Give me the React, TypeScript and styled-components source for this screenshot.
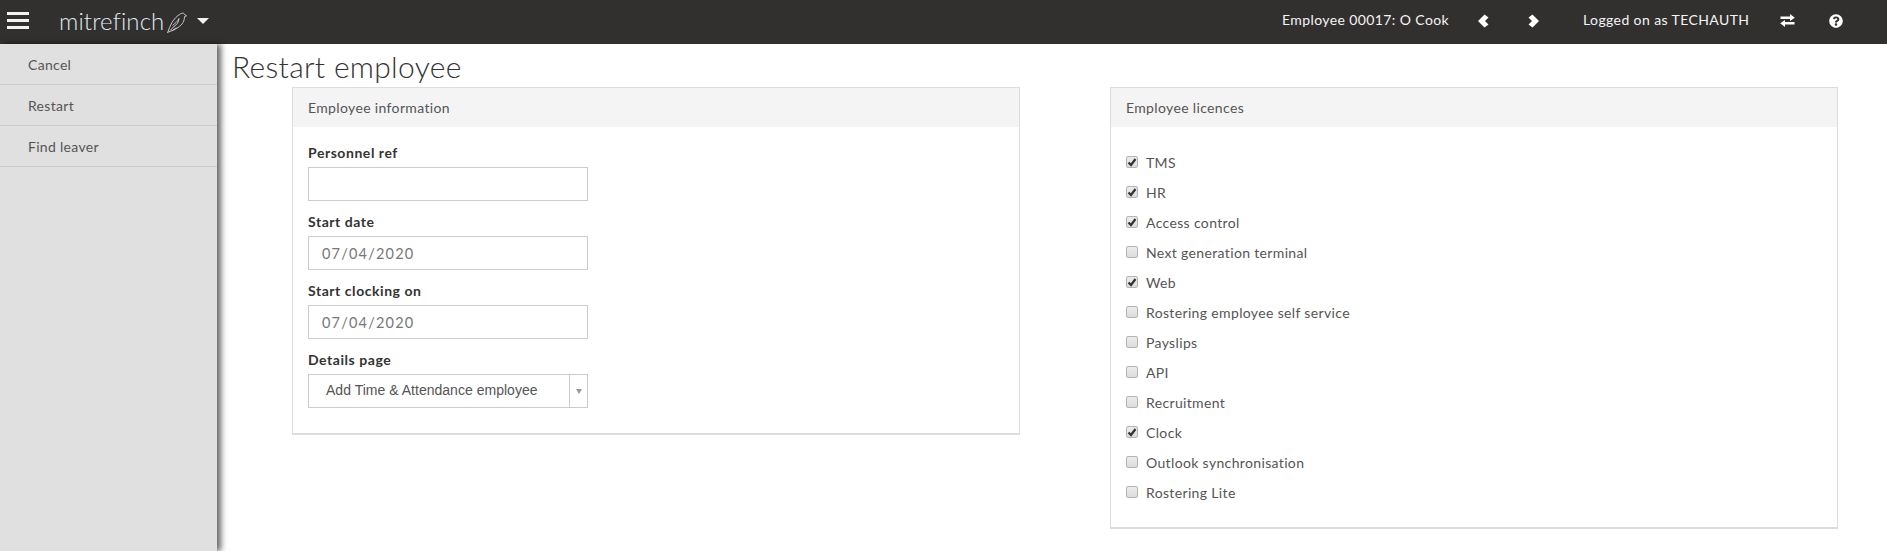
import React from 'react';
import styled, { createGlobalStyle } from 'styled-components';
import { FaQuestionCircle } from 'react-icons/fa';

const Global = createGlobalStyle`
  html, body { margin: 0; padding: 0; background: #fff; height: 100%; overflow: hidden; }
  body { font-family: Lato, "Open Sans", "Liberation Sans", sans-serif; color: #444; letter-spacing: 0.3px; }
  * { box-sizing: border-box; }
`;

const Page = styled.div`display: flex; flex-direction: column; height: 551px;`;
const NavBar = styled.header`
  height: 44px; background: #32302e; display: flex; align-items: center; color: #fff; flex: none; padding-bottom: 3px;
`;
const Burger = styled.div`
  width: 22px; margin-left: 7px; display: flex; flex-direction: column; gap: 4px;
  & > span { display: block; height: 3px; background: #f2f2f2; }
`;
const Brand = styled.div`
  margin-left: 30px; font-size: 24px; font-weight: 300; color: #dfeaf0; letter-spacing: 0.1px; line-height: 1;
`;
const Bird = styled.svg`width: 20px; height: 21px; flex: none; margin: 3px 0 0 3px;`;
const Caret = styled.span`
  width: 0; height: 0; border-left: 6px solid transparent; border-right: 6px solid transparent;
  border-top: 6px solid #f2f2f2; margin-left: 10px;
`;
const NavRight = styled.div`margin-left: auto; display: flex; align-items: center; font-size: 14px; height: 100%;`;
const NavText = styled.span<{ $w: number }>`display: block; width: ${p => p.$w}px; white-space: nowrap; color: #f4f4f4; letter-spacing: 0.4px; margin-bottom: 2px;`;
const NavIcon = styled.span<{ $w: number; $s?: number }>`
  display: flex; width: ${p => p.$w}px; font-size: ${p => p.$s ?? 13}px; color: #fff;
`;

const Body = styled.div`flex: 1; display: flex; min-height: 0;`;
const Sidebar = styled.nav`
  width: 217px; flex: none; background: #e0e0e0; box-shadow: 4px 0 6px 0 rgba(0,0,0,.6);
  position: relative; z-index: 1;
`;
const SideItem = styled.div`
  height: 41px; border-bottom: 1px solid #ccc; padding-left: 28px; display: flex; align-items: center;
  font-size: 14px; color: #555;
`;
const Main = styled.main`flex: 1; padding: 4px 49px 0 15px; min-width: 0;`;
const Title = styled.h1`
  margin: 0; font-size: 30px; font-weight: 300; line-height: 37px; color: #333; height: 39px; letter-spacing: 0.3px;
`;
const Columns = styled.div`display: grid; grid-template-columns: 728px 728px; gap: 90px; padding-left: 60px;`;
const Panel = styled.section<{ $h: number }>`
  border: 1px solid #ddd; border-bottom-width: 2px; height: ${p => p.$h}px; background: #fff;
`;
const PanelHead = styled.div`
  height: 39px; background: #f4f4f4; padding-left: 15px; display: flex; align-items: center; font-size: 14px; color: #555; letter-spacing: 0.35px;
`;
const Form = styled.div`padding: 16px 15px 0;`;
const Field = styled.div`margin-bottom: 11px;`;
const Label = styled.label`display: block; font-size: 14px; font-weight: 700; color: #333; line-height: 20px; margin-bottom: 4px; height: 20px; letter-spacing: 0.55px;`;
const Input = styled.div`
  width: 280px; height: 34px; border: 1px solid #ccc; padding-left: 13px; display: flex; align-items: center;
  font-size: 14.5px; color: #777; letter-spacing: 1.2px;
`;
const Select = styled.div`
  width: 280px; height: 34px; border: 1px solid #ccc; display: flex; align-items: center;
  font-family: "Liberation Sans", Arial, sans-serif; font-size: 14px; color: #555; letter-spacing: 0.02px;
`;
const SelectText = styled.span`flex: 1; padding: 0 0 2px 17px;`;
const SelectArrow = styled.span`
  width: 18px; height: 100%; border-left: 1px solid #ccc; display: flex; align-items: center; justify-content: center;
  &::after { content: ""; border-left: 3px solid transparent; border-right: 3px solid transparent; border-top: 5px solid #999; }
`;
const List = styled.div`padding: 20px 15px 0; display: flex; flex-direction: column;`;
const Row = styled.div`height: 30px; display: flex; align-items: center; font-size: 14px; color: #555; letter-spacing: 0.35px;`;
const Box = styled.span`
  width: 12px; height: 12px; border: 1px solid #b4b4b4; border-radius: 2px; margin-right: 8px; flex: none;
  background: linear-gradient(#ececec, #dcdcdc); display: flex; align-items: center; justify-content: center;
  & svg { width: 10px; height: 10px; }
`;

const licences: [string, boolean][] = [
  ['TMS', true], ['HR', true], ['Access control', true], ['Next generation terminal', false], ['Web', true],
  ['Rostering employee self service', false], ['Payslips', false], ['API', false], ['Recruitment', false],
  ['Clock', true], ['Outlook synchronisation', false], ['Rostering Lite', false],
];

export default function App() {
  return (
    <Page>
      <Global />
      <NavBar>
        <Burger><span /><span /><span /></Burger>
        <Brand>mitrefinch</Brand>
        <Bird viewBox="0 0 20 21" fill="none" stroke="#d8d8d8" strokeWidth="0.9" strokeLinejoin="round" strokeLinecap="round">
          <path d="M0.8 20.2 C2 17 3 14 5 10.5 C7 7 10 4 12.5 2.5 C14.5 1 17 0.5 17.5 2.5 L19.5 3.8 L17.5 4.6 C17.5 9 15.5 12.5 11 15.5 C8 17.5 5 19 0.8 20.2 Z" />
          <path d="M6 13 C8 11 10.5 10 12 6.5 C11.5 10.5 10 12.5 7 14.5 M3.5 18.2 L7 14.5 M5.5 18.5 L9 16" />
        </Bird>
        <Caret />
        <NavRight>
          <NavText $w={196}>Employee 00017: O Cook</NavText>
          <NavIcon $w={50}>
            <svg width="11" height="14" viewBox="0 0 11 14"><path d="M0 7 L6.5 0.5 L10.5 3.5 L7 7 L10.5 10.5 L6.5 13.5 Z" fill="#fff" /></svg>
          </NavIcon>
          <NavIcon $w={55}>
            <svg width="11" height="14" viewBox="0 0 11 14"><path d="M11 7 L4.5 0.5 L0.5 3.5 L4 7 L0.5 10.5 L4.5 13.5 Z" fill="#fff" /></svg>
          </NavIcon>
          <NavText $w={197}>Logged on as TECHAUTH</NavText>
          <NavIcon $w={49}>
            <svg width="15" height="13" viewBox="0 0 15 13"><path d="M0.5 2.5 H10 V0 L14.8 3.7 L10 7 V4.9 H0.5 Z M14.5 8 H5 V5.9 L0.2 9.3 L5 13 V10.4 H14.5 Z" fill="#fff" /></svg>
          </NavIcon>
          <NavIcon $w={58} $s={14}><FaQuestionCircle /></NavIcon>
        </NavRight>
      </NavBar>
      <Body>
        <Sidebar>
          <SideItem>Cancel</SideItem>
          <SideItem>Restart</SideItem>
          <SideItem>Find leaver</SideItem>
        </Sidebar>
        <Main>
          <Title>Restart employee</Title>
          <Columns>
            <Panel $h={348}>
              <PanelHead>Employee information</PanelHead>
              <Form>
                <Field><Label>Personnel ref</Label><Input /></Field>
                <Field><Label>Start date</Label><Input>07/04/2020</Input></Field>
                <Field><Label>Start clocking on</Label><Input>07/04/2020</Input></Field>
                <Field>
                  <Label>Details page</Label>
                  <Select><SelectText>Add Time &amp; Attendance employee</SelectText><SelectArrow /></Select>
                </Field>
              </Form>
            </Panel>
            <Panel $h={442}>
              <PanelHead>Employee licences</PanelHead>
              <List>
                {licences.map(([name, on]) => (
                  <Row key={name}>
                    <Box>
                      {on && (
                        <svg viewBox="0 0 10 10"><path d="M1.5 5.5 L4 8 L8.5 2" fill="none" stroke="#333" strokeWidth="2.2" /></svg>
                      )}
                    </Box>
                    {name}
                  </Row>
                ))}
              </List>
            </Panel>
          </Columns>
        </Main>
      </Body>
    </Page>
  );
}
